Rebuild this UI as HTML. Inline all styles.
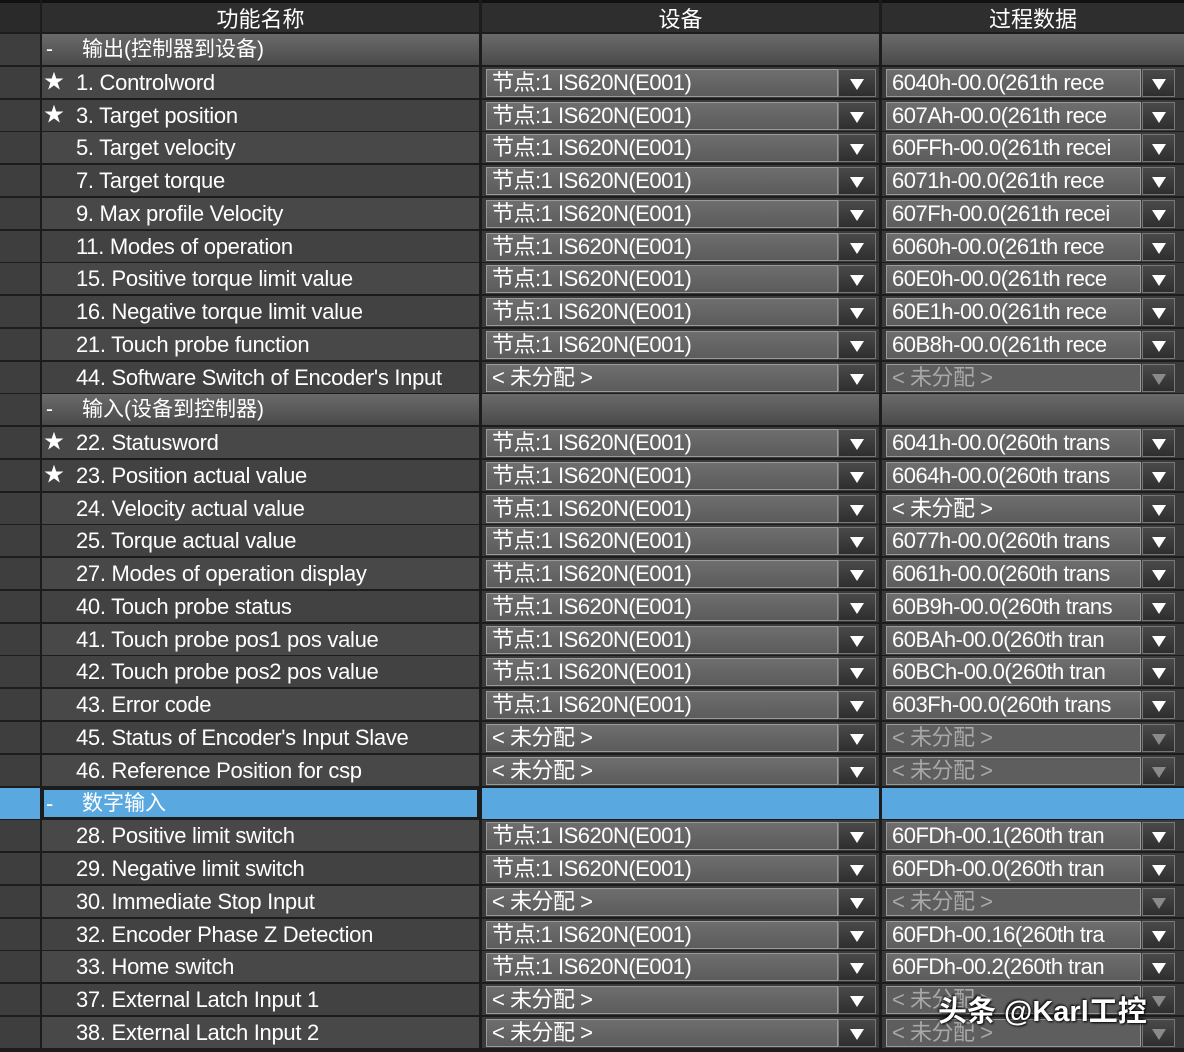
<!DOCTYPE html>
<html><head><meta charset="utf-8"><style>
*{margin:0;padding:0;box-sizing:border-box}
body{width:1184px;height:1052px;background:#1c1c1c;overflow:hidden;font-family:"Liberation Sans","Noto Sans CJK SC",sans-serif;color:#fff;position:relative}
.row{position:absolute;left:0;width:1184px;height:31px}
.c{position:absolute;top:0;height:31px}
.g{left:0;width:40px;background:#3e3e3e}
.n{left:42px;width:437px;background:#484848;font-size:22px;line-height:31px;white-space:nowrap;overflow:hidden}
.row.alt .n{background:#424242}
.d{left:482px;width:397px;background:#3a3a3a}
.p{left:882px;width:302px;background:#3a3a3a}
.star{position:absolute;left:2px;font-size:20px}
.t{position:absolute;left:34px;letter-spacing:-0.3px}
.box{position:absolute;top:2px;height:28px;background:linear-gradient(#6e6e6e,#5c5c5c);border:1px solid #9a9a9a;font-size:22px;line-height:26px;padding-left:5px;white-space:nowrap;overflow:hidden;letter-spacing:-0.5px}
.arr{position:absolute;top:2px;height:28px;background:linear-gradient(#4a4a4a,#2e2e2e);border:1px solid #777}
.arr:after{content:"";position:absolute;left:50%;top:9px;margin-left:-7px;border-left:7px solid transparent;border-right:7px solid transparent;border-top:11px solid #fff}
.d .box{left:4px;width:352px}.d .arr{left:356px;width:38px}
.p .box{left:4px;width:255px}.p .arr{left:260px;width:33px}
.dim .box{color:#a8a8a8;background:#5e5e5e}
.dim .arr:after{border-top-color:#8a8a8a}
.grp .n,.grp .d,.grp .p{background:linear-gradient(#6a6a6a,#4a4a4a)}
.grp .n{font-size:21px}
.blue .n,.blue .d,.blue .p,.blue .g{background:#5aa8e0}
.hdr{position:absolute;top:0;height:32px;background:#2e2e2e;font-size:22px;line-height:34px;text-align:center;border-top:3px solid #111}
</style></head><body>
<div class="hdr" style="left:0;width:40px;background:#2a2a2a"></div>
<div class="hdr" style="left:42px;width:437px">功能名称</div>
<div class="hdr" style="left:482px;width:397px">设备</div>
<div class="hdr" style="left:882px;width:302px">过程数据</div>

<div class="row grp" style="top:34px"><div class="c g"></div><div class="c n"><span style="position:absolute;left:4px">-</span><span style="position:absolute;left:40px">输出(控制器到设备)</span></div><div class="c d"></div><div class="c p"></div></div>

<div class="row" style="top:66.8px"><div class="c g"></div><div class="c n"><span class="star">★</span><span class="t">1. Controlword</span></div><div class="c d"><div class="box">节点:1 IS620N(E001)</div><div class="arr"></div></div><div class="c p"><div class="box">6040h-00.0(261th rece</div><div class="arr"></div></div></div>
<div class="row alt" style="top:99.5px"><div class="c g"></div><div class="c n"><span class="star">★</span><span class="t">3. Target position</span></div><div class="c d"><div class="box">节点:1 IS620N(E001)</div><div class="arr"></div></div><div class="c p"><div class="box">607Ah-00.0(261th rece</div><div class="arr"></div></div></div>
<div class="row" style="top:132.3px"><div class="c g"></div><div class="c n"><span class="t">5. Target velocity</span></div><div class="c d"><div class="box">节点:1 IS620N(E001)</div><div class="arr"></div></div><div class="c p"><div class="box">60FFh-00.0(261th recei</div><div class="arr"></div></div></div>
<div class="row alt" style="top:165px"><div class="c g"></div><div class="c n"><span class="t">7. Target torque</span></div><div class="c d"><div class="box">节点:1 IS620N(E001)</div><div class="arr"></div></div><div class="c p"><div class="box">6071h-00.0(261th rece</div><div class="arr"></div></div></div>
<div class="row" style="top:197.8px"><div class="c g"></div><div class="c n"><span class="t">9. Max profile Velocity</span></div><div class="c d"><div class="box">节点:1 IS620N(E001)</div><div class="arr"></div></div><div class="c p"><div class="box">607Fh-00.0(261th recei</div><div class="arr"></div></div></div>
<div class="row alt" style="top:230.6px"><div class="c g"></div><div class="c n"><span class="t">11. Modes of operation</span></div><div class="c d"><div class="box">节点:1 IS620N(E001)</div><div class="arr"></div></div><div class="c p"><div class="box">6060h-00.0(261th rece</div><div class="arr"></div></div></div>
<div class="row" style="top:263.3px"><div class="c g"></div><div class="c n"><span class="t">15. Positive torque limit value</span></div><div class="c d"><div class="box">节点:1 IS620N(E001)</div><div class="arr"></div></div><div class="c p"><div class="box">60E0h-00.0(261th rece</div><div class="arr"></div></div></div>
<div class="row alt" style="top:296.1px"><div class="c g"></div><div class="c n"><span class="t">16. Negative torque limit value</span></div><div class="c d"><div class="box">节点:1 IS620N(E001)</div><div class="arr"></div></div><div class="c p"><div class="box">60E1h-00.0(261th rece</div><div class="arr"></div></div></div>
<div class="row" style="top:328.8px"><div class="c g"></div><div class="c n"><span class="t">21. Touch probe function</span></div><div class="c d"><div class="box">节点:1 IS620N(E001)</div><div class="arr"></div></div><div class="c p"><div class="box">60B8h-00.0(261th rece</div><div class="arr"></div></div></div>
<div class="row alt" style="top:361.6px"><div class="c g"></div><div class="c n"><span class="t">44. Software Switch of Encoder's Input</span></div><div class="c d"><div class="box">&lt; 未分配 &gt;</div><div class="arr"></div></div><div class="c p dim"><div class="box">&lt; 未分配 &gt;</div><div class="arr"></div></div></div>

<div class="row grp" style="top:394.4px"><div class="c g"></div><div class="c n"><span style="position:absolute;left:4px">-</span><span style="position:absolute;left:40px">输入(设备到控制器)</span></div><div class="c d"></div><div class="c p"></div></div>

<div class="row" style="top:427.1px"><div class="c g"></div><div class="c n"><span class="star">★</span><span class="t">22. Statusword</span></div><div class="c d"><div class="box">节点:1 IS620N(E001)</div><div class="arr"></div></div><div class="c p"><div class="box">6041h-00.0(260th trans</div><div class="arr"></div></div></div>
<div class="row alt" style="top:459.9px"><div class="c g"></div><div class="c n"><span class="star">★</span><span class="t">23. Position actual value</span></div><div class="c d"><div class="box">节点:1 IS620N(E001)</div><div class="arr"></div></div><div class="c p"><div class="box">6064h-00.0(260th trans</div><div class="arr"></div></div></div>
<div class="row" style="top:492.6px"><div class="c g"></div><div class="c n"><span class="t">24. Velocity actual value</span></div><div class="c d"><div class="box">节点:1 IS620N(E001)</div><div class="arr"></div></div><div class="c p"><div class="box">&lt; 未分配 &gt;</div><div class="arr"></div></div></div>
<div class="row alt" style="top:525.4px"><div class="c g"></div><div class="c n"><span class="t">25. Torque actual value</span></div><div class="c d"><div class="box">节点:1 IS620N(E001)</div><div class="arr"></div></div><div class="c p"><div class="box">6077h-00.0(260th trans</div><div class="arr"></div></div></div>
<div class="row" style="top:558.2px"><div class="c g"></div><div class="c n"><span class="t">27. Modes of operation display</span></div><div class="c d"><div class="box">节点:1 IS620N(E001)</div><div class="arr"></div></div><div class="c p"><div class="box">6061h-00.0(260th trans</div><div class="arr"></div></div></div>
<div class="row alt" style="top:590.9px"><div class="c g"></div><div class="c n"><span class="t">40. Touch probe status</span></div><div class="c d"><div class="box">节点:1 IS620N(E001)</div><div class="arr"></div></div><div class="c p"><div class="box">60B9h-00.0(260th trans</div><div class="arr"></div></div></div>
<div class="row" style="top:623.7px"><div class="c g"></div><div class="c n"><span class="t">41. Touch probe pos1 pos value</span></div><div class="c d"><div class="box">节点:1 IS620N(E001)</div><div class="arr"></div></div><div class="c p"><div class="box">60BAh-00.0(260th tran</div><div class="arr"></div></div></div>
<div class="row alt" style="top:656.4px"><div class="c g"></div><div class="c n"><span class="t">42. Touch probe pos2 pos value</span></div><div class="c d"><div class="box">节点:1 IS620N(E001)</div><div class="arr"></div></div><div class="c p"><div class="box">60BCh-00.0(260th tran</div><div class="arr"></div></div></div>
<div class="row" style="top:689.2px"><div class="c g"></div><div class="c n"><span class="t">43. Error code</span></div><div class="c d"><div class="box">节点:1 IS620N(E001)</div><div class="arr"></div></div><div class="c p"><div class="box">603Fh-00.0(260th trans</div><div class="arr"></div></div></div>
<div class="row alt" style="top:722px"><div class="c g"></div><div class="c n"><span class="t">45. Status of Encoder's Input Slave</span></div><div class="c d"><div class="box">&lt; 未分配 &gt;</div><div class="arr"></div></div><div class="c p dim"><div class="box">&lt; 未分配 &gt;</div><div class="arr"></div></div></div>
<div class="row" style="top:754.7px"><div class="c g"></div><div class="c n"><span class="t">46. Reference Position for csp</span></div><div class="c d"><div class="box">&lt; 未分配 &gt;</div><div class="arr"></div></div><div class="c p dim"><div class="box">&lt; 未分配 &gt;</div><div class="arr"></div></div></div>

<div class="row blue" style="top:787.5px"><div class="c g"></div><div class="c n" style="border:2px solid #1c1c1c"><span style="position:absolute;left:2px;line-height:27px">-</span><span style="position:absolute;left:38px;line-height:27px;font-size:21px">数字输入</span></div><div class="c d"></div><div class="c p"></div></div>

<div class="row" style="top:820.2px"><div class="c g"></div><div class="c n"><span class="t">28. Positive limit switch</span></div><div class="c d"><div class="box">节点:1 IS620N(E001)</div><div class="arr"></div></div><div class="c p"><div class="box">60FDh-00.1(260th tran</div><div class="arr"></div></div></div>
<div class="row alt" style="top:853px"><div class="c g"></div><div class="c n"><span class="t">29. Negative limit switch</span></div><div class="c d"><div class="box">节点:1 IS620N(E001)</div><div class="arr"></div></div><div class="c p"><div class="box">60FDh-00.0(260th tran</div><div class="arr"></div></div></div>
<div class="row" style="top:885.8px"><div class="c g"></div><div class="c n"><span class="t">30. Immediate Stop Input</span></div><div class="c d"><div class="box">&lt; 未分配 &gt;</div><div class="arr"></div></div><div class="c p dim"><div class="box">&lt; 未分配 &gt;</div><div class="arr"></div></div></div>
<div class="row alt" style="top:918.5px"><div class="c g"></div><div class="c n"><span class="t">32. Encoder Phase Z Detection</span></div><div class="c d"><div class="box">节点:1 IS620N(E001)</div><div class="arr"></div></div><div class="c p"><div class="box">60FDh-00.16(260th tra</div><div class="arr"></div></div></div>
<div class="row" style="top:951.3px"><div class="c g"></div><div class="c n"><span class="t">33. Home switch</span></div><div class="c d"><div class="box">节点:1 IS620N(E001)</div><div class="arr"></div></div><div class="c p"><div class="box">60FDh-00.2(260th tran</div><div class="arr"></div></div></div>
<div class="row alt" style="top:984px"><div class="c g"></div><div class="c n"><span class="t">37. External Latch Input 1</span></div><div class="c d"><div class="box">&lt; 未分配 &gt;</div><div class="arr"></div></div><div class="c p dim"><div class="box">&lt; 未分配 &gt;</div><div class="arr"></div></div></div>
<div class="row" style="top:1016.8px"><div class="c g"></div><div class="c n"><span class="t">38. External Latch Input 2</span></div><div class="c d"><div class="box">&lt; 未分配 &gt;</div><div class="arr"></div></div><div class="c p dim"><div class="box">&lt; 未分配 &gt;</div><div class="arr"></div></div></div>

<div style="position:absolute;left:938px;top:988px;font-size:29px;font-weight:bold;color:#fff;text-shadow:1px 1px 2px #000,-1px -1px 2px #000;white-space:nowrap">头条 @Karl工控</div>
</body></html>
